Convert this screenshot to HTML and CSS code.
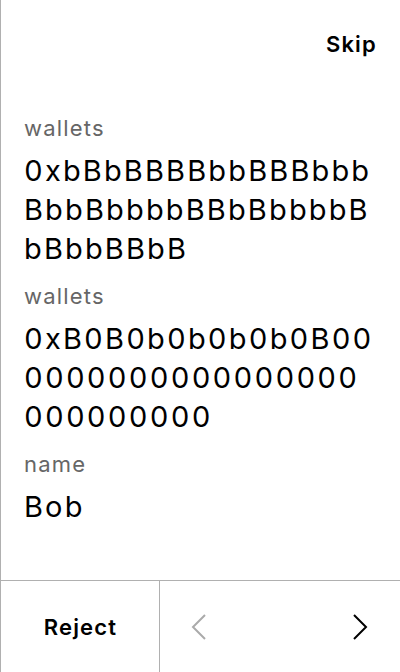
FILE: index.html
```html
<!DOCTYPE html>
<html lang="en">
<head>
<meta charset="utf-8">
<title>Sign request</title>
<link rel="stylesheet" href="styles.css">
</head>
<body>
<div class="screen">
  <header class="top">
    <button class="skip">Skip</button>
  </header>
  <main class="fields">
    <div class="field">
      <div class="label">wallets</div>
      <div class="value">0xbBbBBBBbbBBBbbbBbbBbbbbBBbBbbbbBbBbbBBbB</div>
    </div>
    <div class="field">
      <div class="label">wallets</div>
      <div class="value">0xB0B0b0b0b0b0B000000000000000000000000000</div>
    </div>
    <div class="field">
      <div class="label">name</div>
      <div class="value">Bob</div>
    </div>
  </main>
  <footer class="actions">
    <button class="reject">Reject</button>
    <div class="nav">
      <button class="nav-btn prev" aria-label="Previous">
        <svg width="16" height="26" viewBox="0 0 16 26"><polyline points="14,1 2,13 14,25" fill="none" stroke="currentColor" stroke-width="2"/></svg>
      </button>
      <button class="nav-btn next" aria-label="Next">
        <svg width="16" height="26" viewBox="0 0 16 26"><polyline points="2,1 14,13 2,25" fill="none" stroke="currentColor" stroke-width="2"/></svg>
      </button>
    </div>
  </footer>
</div>
</body>
</html>
```

FILE: styles.css
```css
* {
  box-sizing: border-box;
}

html, body {
  margin: 0;
  padding: 0;
  background: #ffffff;
}

body {
  font-family: Inter, "Noto Sans", sans-serif;
  color: #000000;
}

button {
  font-family: inherit;
  background: none;
  border: 0;
  padding: 0;
  margin: 0;
  color: inherit;
  cursor: pointer;
}

.screen {
  width: 400px;
  height: 672px;
  border-left: 1px solid #b0b0b0;
  display: flex;
  flex-direction: column;
}

.top {
  display: flex;
  justify-content: flex-end;
  padding: 32px 23px 0 24px;
}

.skip {
  font-size: 22px;
  line-height: 24px;
  font-weight: 600;
  letter-spacing: 1.2px;
}

.fields {
  flex: 1;
  display: flex;
  flex-direction: column;
  gap: 14px;
  padding: 58px 23px 0 23px;
}

.field {
  display: flex;
  flex-direction: column;
  gap: 9px;
}

.label {
  font-size: 22px;
  line-height: 28px;
  letter-spacing: 1.2px;
  color: #666666;
}

.value {
  font-size: 29px;
  line-height: 39px;
  letter-spacing: 2.15px;
  font-variant-numeric: tabular-nums;
  word-break: break-all;
}

.actions {
  height: 92px;
  border-top: 1px solid #b0b0b0;
  display: flex;
}

.reject {
  width: 159px;
  border-right: 1px solid #b0b0b0;
  font-size: 22px;
  font-weight: 600;
  letter-spacing: 1.2px;
  padding-left: 1px;
}

.nav {
  flex: 1;
  display: flex;
  justify-content: space-between;
  align-items: center;
  padding: 0 32px 0 31px;
}

.nav-btn {
  display: flex;
}

.prev {
  color: #aaaaaa;
}

.next {
  color: #000000;
}
```
